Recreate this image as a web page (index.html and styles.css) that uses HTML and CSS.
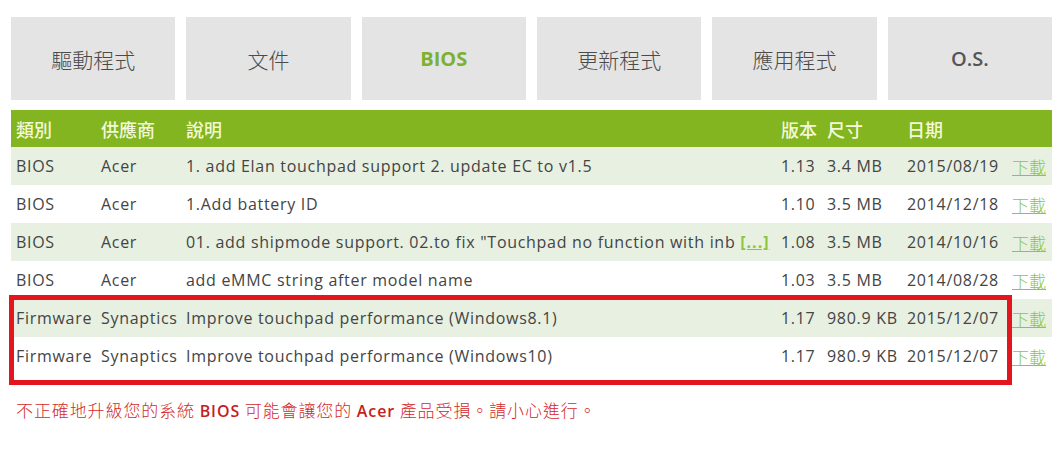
FILE: index.html
```html
<!DOCTYPE html>
<html lang="zh-Hant">
<head>
    <meta charset="UTF-8">
    <title>BIOS</title>
    <link rel="stylesheet" href="styles.css">
</head>
<body>

<div class="page">
    <div class="tabs">
        <div class="tab">驅動程式</div>
        <div class="tab">文件</div>
        <div class="tab tab-active">BIOS</div>
        <div class="tab">更新程式</div>
        <div class="tab">應用程式</div>
        <div class="tab tab-latin">O.S.</div>
    </div>

    <div class="table-wrap">
        <table>
            <colgroup>
                <col class="c-type">
                <col class="c-vendor">
                <col class="c-desc">
                <col class="c-ver">
                <col class="c-size">
                <col class="c-date">
                <col class="c-dl">
            </colgroup>
            <thead>
            <tr>
                <td>類別</td>
                <td>供應商</td>
                <td>說明</td>
                <td>版本</td>
                <td>尺寸</td>
                <td>日期</td>
                <td></td>
            </tr>
            </thead>
            <tbody>
            <tr>
                <td>BIOS</td>
                <td>Acer</td>
                <td>1. add Elan touchpad support 2. update EC to v1.5</td>
                <td>1.13</td>
                <td>3.4 MB</td>
                <td>2015/08/19</td>
                <td><a href="#">下載</a></td>
            </tr>
            <tr>
                <td>BIOS</td>
                <td>Acer</td>
                <td>1.Add battery ID</td>
                <td>1.10</td>
                <td>3.5 MB</td>
                <td>2014/12/18</td>
                <td><a href="#">下載</a></td>
            </tr>
            <tr>
                <td>BIOS</td>
                <td>Acer</td>
                <td>01. add shipmode support. 02.to fix "Touchpad no function with inb <a href="#" class="more">[...]</a></td>
                <td>1.08</td>
                <td>3.5 MB</td>
                <td>2014/10/16</td>
                <td><a href="#">下載</a></td>
            </tr>
            <tr>
                <td>BIOS</td>
                <td>Acer</td>
                <td>add eMMC string after model name</td>
                <td>1.03</td>
                <td>3.5 MB</td>
                <td>2014/08/28</td>
                <td><a href="#">下載</a></td>
            </tr>
            <tr>
                <td>Firmware</td>
                <td>Synaptics</td>
                <td>Improve touchpad performance (Windows8.1)</td>
                <td>1.17</td>
                <td>980.9 KB</td>
                <td>2015/12/07</td>
                <td><a href="#">下載</a></td>
            </tr>
            <tr>
                <td>Firmware</td>
                <td>Synaptics</td>
                <td>Improve touchpad performance (Windows10)</td>
                <td>1.17</td>
                <td>980.9 KB</td>
                <td>2015/12/07</td>
                <td><a href="#">下載</a></td>
            </tr>
            </tbody>
        </table>
        <div class="highlight"></div>
    </div>

    <p class="warning">不正確地升級您的系統 <b>BIOS</b> 可能會讓您的 <b>Acer</b> 產品受損。請小心進行。</p>
</div>

</body>
</html>
```

FILE: styles.css
```css
body {
    margin: 0;
    padding: 0;
    background-color: #ffffff;
    font-family: "Open Sans", "Noto Sans CJK TC", sans-serif;
    color: #444444;
}

.page {
    padding: 17px 10px 0 11px;
}

.tabs {
    display: flex;
    gap: 11px;
    width: 1041px;
}

.tab {
    flex: 1;
    height: 83px;
    background-color: #e4e4e4;
    display: flex;
    align-items: center;
    justify-content: center;
    font-family: "Noto Sans CJK TC", sans-serif;
    font-size: 21px;
    font-weight: 300;
    color: #4a4a4a;
}

.tab-active {
    font-family: "Open Sans", sans-serif;
    font-size: 20px;
    font-weight: bold;
    color: #7db12f;
}

.tab-latin {
    font-family: "Open Sans", sans-serif;
    font-size: 20px;
    font-weight: 600;
    color: #555555;
}

.table-wrap {
    position: relative;
    margin-top: 10px;
    width: 1041px;
}

table {
    width: 1041px;
    border-collapse: collapse;
    table-layout: fixed;
}

.c-type { width: 85px; }
.c-vendor { width: 85px; }
.c-desc { width: 595px; }
.c-ver { width: 46px; }
.c-size { width: 80px; }
.c-date { width: 105px; }
.c-dl { width: 45px; }

td {
    padding: 0 0 0 5px;
    height: 38px;
    font-size: 16px;
    letter-spacing: 0.7px;
    white-space: nowrap;
    overflow: hidden;
}

thead td {
    height: 37px;
    background-color: #82b51f;
    color: #f3f9d8;
    font-family: "Noto Sans CJK TC", sans-serif;
    font-weight: 500;
    font-size: 18px;
    letter-spacing: 0;
}

tbody tr:nth-child(odd) {
    background-color: #e7f0e1;
}

td a {
    color: #8cc63e;
    font-family: "Noto Sans CJK TC", sans-serif;
    font-size: 17px;
    font-weight: 300;
    letter-spacing: 0;
}

td a.more {
    font-family: "Open Sans", sans-serif;
    font-size: 16px;
    font-weight: bold;
    letter-spacing: 1px;
    color: #8cc63e;
}

.highlight {
    position: absolute;
    left: -2px;
    top: 185px;
    width: 993px;
    height: 80px;
    border: 5px solid #e3151f;
}

.warning {
    margin: 22px 0 0 5px;
    font-family: "Noto Sans CJK TC", sans-serif;
    font-size: 17px;
    font-weight: 300;
    letter-spacing: 0.9px;
    color: #d22a2a;
}

.warning b {
    font-family: "Open Sans", sans-serif;
    font-size: 16px;
    font-weight: 600;
    color: #c41e1e;
}
```
